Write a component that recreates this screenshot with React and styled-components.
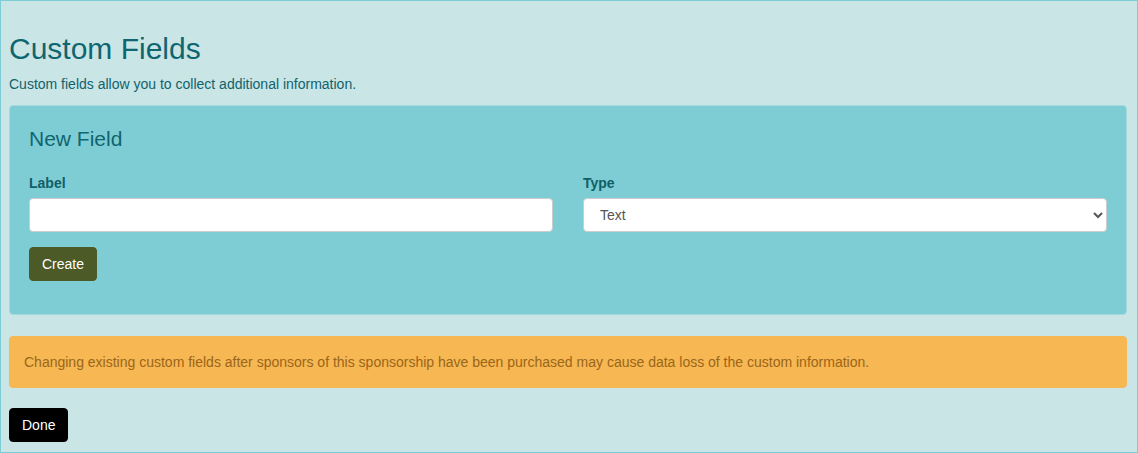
import React from "react";
import styled, { createGlobalStyle } from "styled-components";

const Global = createGlobalStyle`
  html, body { margin: 0; padding: 0; }
  body {
    font-family: "Liberation Sans", Arial, Helvetica, sans-serif;
    font-size: 14px;
    line-height: 20px;
    color: #10626c;
    background: #cae5e6;
  }
  * { box-sizing: border-box; }
`;

const Page = styled.div`
  min-height: 453px;
  border: 1px solid #7ecdd4;
  background: #cae5e6;
  padding: 0 10px 10px 8px;
`;

const Title = styled.h1`
  margin: 31px 0 9px;
  font-size: 30px;
  line-height: 33px;
  font-weight: 400;
  color: #0f6570;
`;

const Lead = styled.p`
  margin: 0 0 11px;
  font-size: 14px;
  line-height: 20px;
  color: #10626c;
`;

const Panel = styled.div`
  background: #7ecdd4;
  border: 1px solid #a4d9dd;
  border-radius: 4px;
  padding: 21px 19px 33px 19px;
`;

const PanelTitle = styled.h3`
  margin: 0 0 23px;
  font-size: 21px;
  line-height: 23px;
  font-weight: 400;
  color: #0f6570;
`;

const Row = styled.div`
  display: grid;
  grid-template-columns: 1fr 1fr;
  column-gap: 30px;
  margin-bottom: 15px;
`;

const Group = styled.div`
  display: flex;
  flex-direction: column;
`;

const Label = styled.label`
  font-weight: 700;
  font-size: 14px;
  line-height: 20px;
  margin-bottom: 5px;
  color: #0f5f68;
`;

const Input = styled.input`
  height: 34px;
  width: 100%;
  border: 1px solid #ccc;
  border-radius: 4px;
  background: #fff;
  padding: 6px 12px;
  font: inherit;
  color: #555;
  outline: none;
`;

const Select = styled.select`
  height: 34px;
  width: 100%;
  border: 1px solid #ccc;
  border-radius: 4px;
  background: #fff;
  padding: 6px 12px;
  font: inherit;
  color: #555;
  outline: none;
`;

const Button = styled.button`
  display: inline-block;
  height: 34px;
  padding: 6px 12px;
  font-family: inherit;
  font-size: 14px;
  line-height: 20px;
  border-radius: 4px;
  border: 1px solid ${(p) => p.$bg};
  background: ${(p) => p.$bg};
  color: #fff;
  cursor: pointer;
`;

const Alert = styled.div`
  margin-top: 21px;
  background: #f7b752;
  border: 1px solid #f7b752;
  border-radius: 4px;
  padding: 15px 14px;
  color: #9a661a;
  font-size: 14px;
  line-height: 20px;
`;

const Footer = styled.div`
  margin-top: 20px;
`;

export default function App() {
  return (
    <>
      <Global />
      <Page>
        <Title>Custom Fields</Title>
        <Lead>Custom fields allow you to collect additional information.</Lead>
        <Panel>
          <PanelTitle>New Field</PanelTitle>
          <Row>
            <Group>
              <Label>Label</Label>
              <Input type="text" />
            </Group>
            <Group>
              <Label>Type</Label>
              <Select defaultValue="text">
                <option value="text">Text</option>
              </Select>
            </Group>
          </Row>
          <Button $bg="#4b5a26">Create</Button>
        </Panel>
        <Alert>
          Changing existing custom fields after sponsors of this sponsorship have been purchased may cause data loss of the custom information.
        </Alert>
        <Footer>
          <Button $bg="#000">Done</Button>
        </Footer>
      </Page>
    </>
  );
}
